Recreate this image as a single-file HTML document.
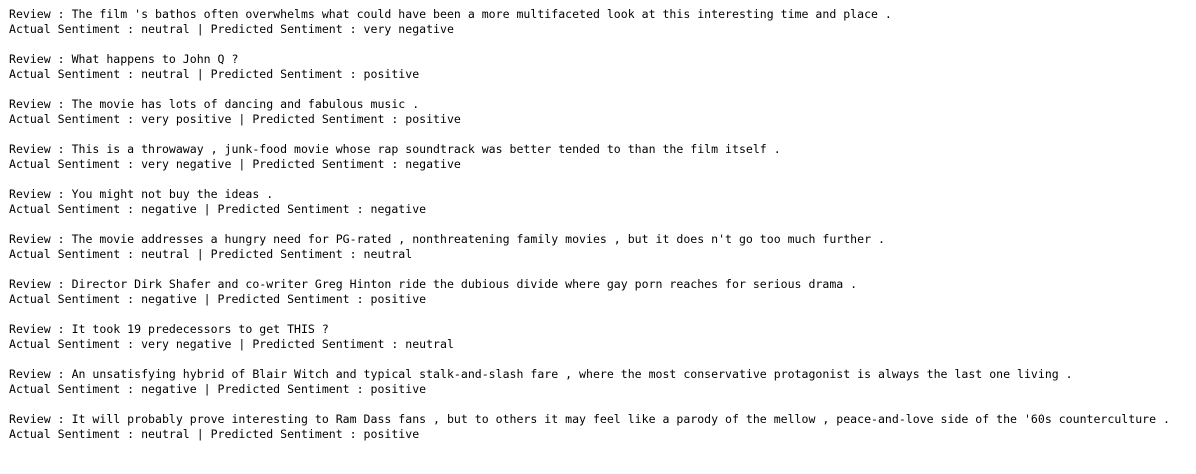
<html><head><style>
body{margin:0;background:#fff;}
pre{margin:0;position:absolute;left:9px;top:7px;font-family:"DejaVu Sans Mono","Liberation Mono",monospace;font-size:11.55px;line-height:15px;color:#000;}
</style></head><body><pre>Review : The film 's bathos often overwhelms what could have been a more multifaceted look at this interesting time and place .
Actual Sentiment : neutral | Predicted Sentiment : very negative

Review : What happens to John Q ?
Actual Sentiment : neutral | Predicted Sentiment : positive

Review : The movie has lots of dancing and fabulous music .
Actual Sentiment : very positive | Predicted Sentiment : positive

Review : This is a throwaway , junk-food movie whose rap soundtrack was better tended to than the film itself .
Actual Sentiment : very negative | Predicted Sentiment : negative

Review : You might not buy the ideas .
Actual Sentiment : negative | Predicted Sentiment : negative

Review : The movie addresses a hungry need for PG-rated , nonthreatening family movies , but it does n't go too much further .
Actual Sentiment : neutral | Predicted Sentiment : neutral

Review : Director Dirk Shafer and co-writer Greg Hinton ride the dubious divide where gay porn reaches for serious drama .
Actual Sentiment : negative | Predicted Sentiment : positive

Review : It took 19 predecessors to get THIS ?
Actual Sentiment : very negative | Predicted Sentiment : neutral

Review : An unsatisfying hybrid of Blair Witch and typical stalk-and-slash fare , where the most conservative protagonist is always the last one living .
Actual Sentiment : negative | Predicted Sentiment : positive

Review : It will probably prove interesting to Ram Dass fans , but to others it may feel like a parody of the mellow , peace-and-love side of the '60s counterculture .
Actual Sentiment : neutral | Predicted Sentiment : positive</pre></body></html>
